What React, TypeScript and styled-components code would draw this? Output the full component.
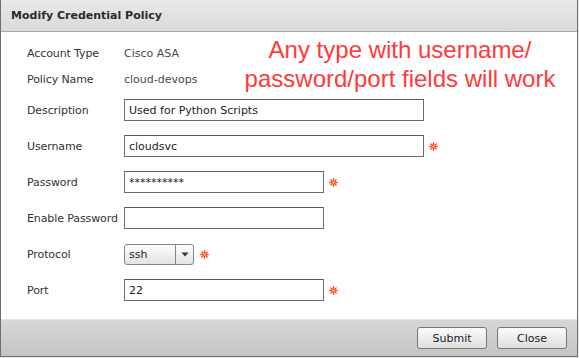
import React from 'react';
import styled, { createGlobalStyle } from 'styled-components';

const GlobalStyle = createGlobalStyle`
  html, body {
    margin: 0;
    padding: 0;
    background: #e9e9e9;
  }
  * {
    box-sizing: border-box;
  }
`;

const Required = () => (
  <Star width="9" height="9" viewBox="0 0 9 9">
    <g stroke="#ff4a1c" strokeWidth="1.4" strokeLinecap="round">
      <line x1="4.5" y1="0.8" x2="4.5" y2="8.2" />
      <line x1="0.8" y1="4.5" x2="8.2" y2="4.5" />
      <line x1="1.9" y1="1.9" x2="7.1" y2="7.1" />
      <line x1="7.1" y1="1.9" x2="1.9" y2="7.1" />
    </g>
    <circle cx="4.5" cy="4.5" r="1.3" fill="#fff" stroke="#ff4a1c" strokeWidth="0.8" />
  </Star>
);

const App = () => {
  return (
    <>
      <GlobalStyle />
      <Dialog>
        <Header>Modify Credential Policy</Header>
        <Body>
          <Note>
            Any type with username/
            <br />
            password/port fields will work
          </Note>
          <Row $h={26}>
            <Label>Account Type</Label>
            <Value>Cisco ASA</Value>
          </Row>
          <Row $h={26}>
            <Label>Policy Name</Label>
            <Value>cloud-devops</Value>
          </Row>
          <Row $h={36}>
            <Label>Description</Label>
            <Field $w={300} readOnly value="Used for Python Scripts" />
          </Row>
          <Row $h={36}>
            <Label>Username</Label>
            <Field $w={300} readOnly value="cloudsvc" />
            <Required />
          </Row>
          <Row $h={36}>
            <Label>Password</Label>
            <Field $w={200} readOnly value="**********" />
            <Required />
          </Row>
          <Row $h={36}>
            <Label>Enable Password</Label>
            <Field $w={200} readOnly value="" />
          </Row>
          <Row $h={36}>
            <Label>Protocol</Label>
            <Select>
              <SelectText>ssh</SelectText>
              <SelectArrow>
                <svg width="8" height="5" viewBox="0 0 8 5">
                  <path d="M0.5 0.5 L7.5 0.5 L4 4.5 Z" fill="#333" />
                </svg>
              </SelectArrow>
            </Select>
            <Required />
          </Row>
          <Row $h={36}>
            <Label>Port</Label>
            <Field $w={200} readOnly value="22" />
            <Required />
          </Row>
        </Body>
        <Footer>
          <Button>Submit</Button>
          <Button>Close</Button>
        </Footer>
      </Dialog>
    </>
  );
};

export default App;

const Dialog = styled.div`
  width: 578px;
  height: 357px;
  display: flex;
  flex-direction: column;
  border-left: 1px solid #6f6f6f;
  border-right: 1px solid #6f6f6f;
  border-bottom: 1px solid #6f6f6f;
  background: #fff;
  font-family: 'DejaVu Sans', Verdana, sans-serif;
  font-size: 11px;
  color: #333;
`;
const Header = styled.div`
  height: 32px;
  display: flex;
  align-items: center;
  padding: 0 10px 1px;
  font-weight: 700;
  color: #2b2b2b;
  background: linear-gradient(#e9e9e9, #dadada);
  border-bottom: 1px solid #a9a9a9;
`;
const Body = styled.div`
  position: relative;
  flex: 1;
  display: flex;
  flex-direction: column;
  padding: 8px 0 0 26px;
`;
const Note = styled.div`
  position: absolute;
  top: 3px;
  left: 239px;
  width: 320px;
  text-align: center;
  font-family: 'Liberation Sans', Arial, sans-serif;
  font-size: 24px;
  line-height: 29px;
  color: #ff3a3a;
`;
const Row = styled.div<{ $h: number }>`
  height: ${({ $h }) => $h}px;
  display: flex;
  align-items: center;
  gap: 5px;
`;
const Label = styled.span`
  width: 92px;
  flex-shrink: 0;
  white-space: nowrap;
  letter-spacing: -0.1px;
  color: #333;
`;
const Value = styled.span`
  color: #4a4a4a;
`;
const Field = styled.input<{ $w: number }>`
  width: ${({ $w }) => $w}px;
  height: 22px;
  margin: 0;
  padding: 0 4px;
  border: 1px solid #6c6c6c;
  border-top-color: #5a5a5a;
  border-radius: 0;
  background: #fff;
  font-family: 'DejaVu Sans', Verdana, sans-serif;
  font-size: 11px;
  color: #222;
  outline: none;
`;
const Select = styled.div`
  width: 70px;
  height: 21px;
  display: flex;
  margin-right: 1px;
  border: 1px solid #858585;
  border-radius: 3px;
  background: linear-gradient(#fdfdfd, #e3e3e3);
`;
const SelectText = styled.span`
  flex: 1;
  display: flex;
  align-items: center;
  padding-left: 4px;
  color: #222;
`;
const SelectArrow = styled.span`
  width: 18px;
  display: flex;
  align-items: center;
  justify-content: center;
  border-left: 1px solid #858585;
`;
const Star = styled.svg`
  display: block;
  flex-shrink: 0;
`;
const Footer = styled.div`
  height: 37px;
  display: flex;
  align-items: flex-start;
  justify-content: flex-end;
  gap: 10px;
  padding: 7px 10px 0;
  border-top: 1px solid #e4e4e4;
  background: linear-gradient(#d6d6d6, #c5c5c5);
`;
const Button = styled.button`
  width: 70px;
  height: 22px;
  padding: 0;
  border: 1px solid #767676;
  border-radius: 3px;
  background: linear-gradient(#fbfbfb, #dedede);
  font-family: 'DejaVu Sans', Verdana, sans-serif;
  font-size: 11px;
  color: #222;
`;
